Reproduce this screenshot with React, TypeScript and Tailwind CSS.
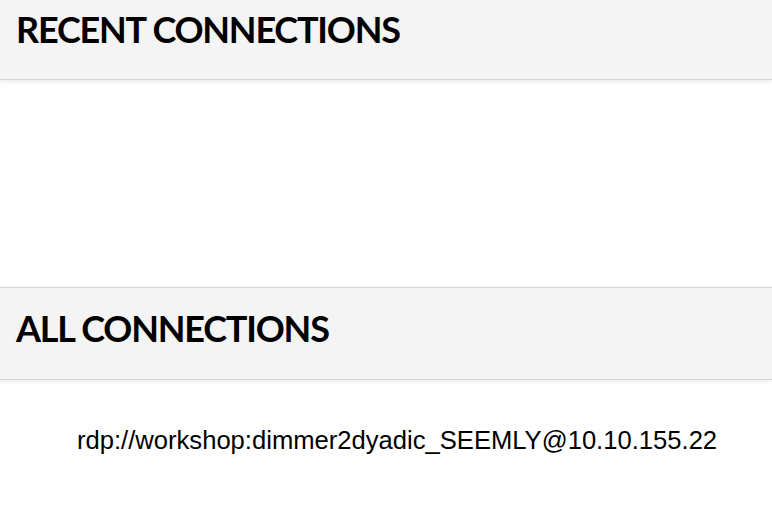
const RECENT = "RECENT CONNECTIONS";
const ALL = "ALL CONNECTIONS";

const headerFont = { fontFamily: "Lato, 'Liberation Sans', sans-serif" };

export default function App() {
  return (
    <div className="h-[528px] w-[772px] overflow-hidden bg-white">
      {/* recent, top is scrolled off */}
      <div className="h-[80px] border-b border-[#d4d4d4] bg-[#f4f4f4] shadow-[0_2px_4px_rgba(0,0,0,0.08)]">
        <h2
          className="pl-[16px] pt-[5px] text-[36px] font-bold leading-[48px] tracking-[-1.2px] text-black"
          style={headerFont}
        >
          {RECENT}
        </h2>
      </div>

      <div className="h-[207px]" />

      <div className="h-[93px] border-y border-[#d4d4d4] bg-[#f4f4f4] pt-[16px] shadow-[0_2px_4px_rgba(0,0,0,0.08)]">
        <h2
          className="pl-[16px] text-[36px] font-bold leading-[48px] tracking-[-1.2px] text-black"
          style={headerFont}
        >
          {ALL}
        </h2>
      </div>

      <div className="pl-[77px] pt-[45px]">
        <a
          className="text-[25.6px] leading-[30px] text-black"
          style={{ fontFamily: "'Liberation Sans', Arial, sans-serif" }}
        >
          rdp://workshop:dimmer2dyadic_SEEMLY@10.10.155.22
        </a>
      </div>
    </div>
  );
}
